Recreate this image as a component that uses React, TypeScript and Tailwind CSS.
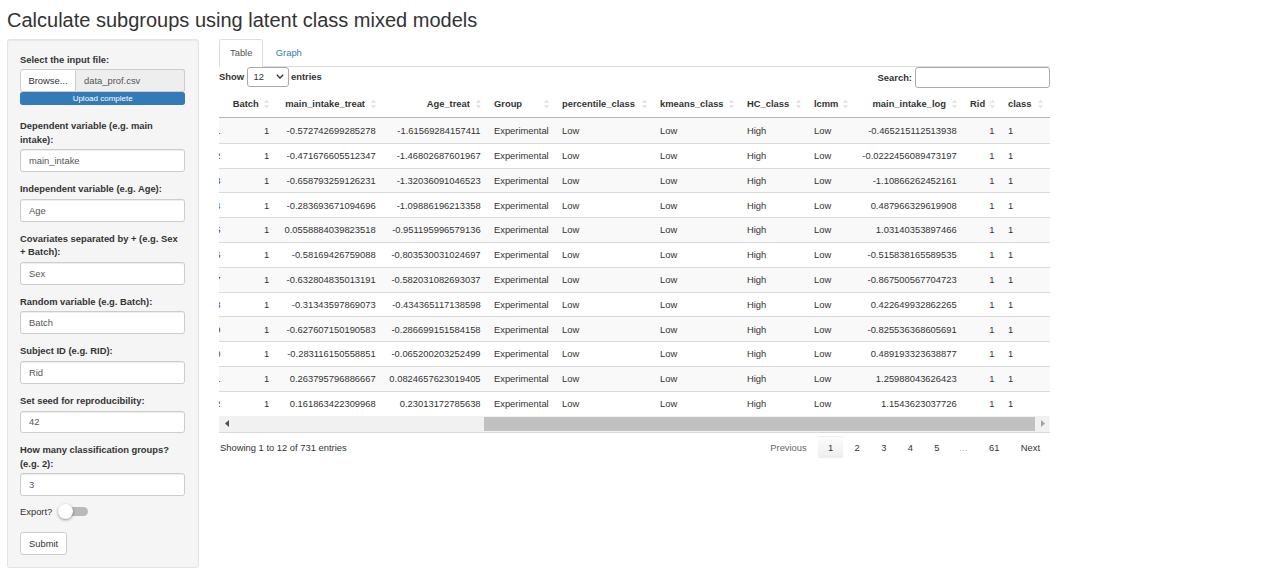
import React from "react";
import clsx from "clsx";

const rows: [string, string, string][] = [
  ["-0.572742699285278", "-1.61569284157411", "-0.465215112513938"],
  ["-0.471676605512347", "-1.46802687601967", "-0.0222456089473197"],
  ["-0.658793259126231", "-1.32036091046523", "-1.10866262452161"],
  ["-0.283693671094696", "-1.09886196213358", "0.487966329619908"],
  ["0.0558884039823518", "-0.951195996579136", "1.03140353897466"],
  ["-0.58169426759088", "-0.803530031024697", "-0.515838165589535"],
  ["-0.632804835013191", "-0.582031082693037", "-0.867500567704723"],
  ["-0.31343597869073", "-0.434365117138598", "0.422649932862265"],
  ["-0.627607150190583", "-0.286699151584158", "-0.825536368605691"],
  ["-0.283116150558851", "-0.065200203252499", "0.489193323638877"],
  ["0.263795796886667", "0.0824657623019405", "1.25988043626423"],
  ["0.161863422309968", "0.23013172785638", "1.1543623037726"],
];

const columns = [
  { name: "", width: "w-[40px]", right: true },
  { name: "Batch", width: "w-[50px]", right: true },
  { name: "main_intake_treat", width: "w-[106.4px]", right: true },
  { name: "Age_treat", width: "w-[104.9px]", right: true },
  { name: "Group", width: "w-[68px]", right: false },
  { name: "percentile_class", width: "w-[98px]", right: false },
  { name: "kmeans_class", width: "w-[87px]", right: false },
  { name: "HC_class", width: "w-[67px]", right: false },
  { name: "lcmm", width: "w-[47.7px]", right: false },
  { name: "main_intake_log", width: "w-[108.4px]", right: true },
  { name: "Rid", width: "w-[37.9px]", right: true },
  { name: "class", width: "w-[48.7px]", right: false },
];

function Field({ label, value }: { label: string; value: string }) {
  return (
    <div className="mb-[10px]">
      <label className="block font-bold mb-[3.35px]">{label}</label>
      <input
        readOnly
        value={value}
        className="block w-full h-[22.8px] px-[8px] border border-[#ccc] rounded-[2.7px] bg-white text-[#555] text-[9.4px] shadow-[inset_0_1px_1px_rgba(0,0,0,0.075)] outline-none"
      />
    </div>
  );
}

function Sidebar() {
  return (
    <div className="w-[192px] shrink-0 bg-[#f5f5f5] border border-[#e3e3e3] rounded-[2.7px] pl-[12px] pr-[12.7px] pt-[12.7px] pb-[12px] shadow-[inset_0_1px_1px_rgba(0,0,0,0.05)]">
      <label className="block font-bold mb-[3.35px]">Select the input file:</label>
      <div className="flex h-[22.8px]">
        <div className="w-[56px] flex items-center justify-center bg-white border border-[#ccc] rounded-l-[2.7px] text-[#333]">
          Browse...
        </div>
        <div className="flex-1 flex items-center pl-[8px] bg-[#eee] border border-l-0 border-[#ccc] rounded-r-[2.7px] text-[#555]">
          data_prof.csv
        </div>
      </div>
      <div className="h-[13px] mb-[14px] rounded-[2.7px] bg-[#337ab7] text-white text-[8px] leading-[13px] text-center">
        Upload complete
      </div>
      <Field label="Dependent variable (e.g. main intake):" value="main_intake" />
      <Field label="Independent variable (e.g. Age):" value="Age" />
      <Field label="Covariates separated by + (e.g. Sex + Batch):" value="Sex" />
      <Field label="Random variable (e.g. Batch):" value="Batch" />
      <Field label="Subject ID (e.g. RID):" value="Rid" />
      <Field label="Set seed for reproducibility:" value="42" />
      <div className="-mb-[2px]">
        <Field label="How many classification groups? (e.g. 2):" value="3" />
      </div>
      <div className="flex items-center h-[14px] mb-[13.7px]">
        <span>Export?</span>
        <span className="relative ml-[5.6px] w-[30px] h-[15px]">
          <span className="absolute left-[3px] right-0 top-[3px] h-[9px] rounded-full bg-[#b9b9b9]" />
          <span className="absolute left-0 top-0 w-[15px] h-[15px] rounded-full bg-white shadow-[0_1px_3px_rgba(0,0,0,0.4)]" />
        </span>
      </div>
      <button className="h-[22.8px] px-[8px] border border-[#ccc] rounded-[2.7px] bg-white text-[#333]">
        Submit
      </button>
    </div>
  );
}

function SortIcon() {
  return (
    <svg
      className="absolute right-[6.7px] top-1/2 -translate-y-1/2"
      width="5"
      height="10"
      viewBox="0 0 5 10"
    >
      <path d="M2.5 0.5L5 4H0z M0 6h5L2.5 9.5z" fill="#333" fillOpacity="0.13" />
    </svg>
  );
}

function Pager() {
  const btn = "px-[9px] py-[4.2px] ml-[1.34px] border border-transparent rounded-[2px]";
  return (
    <div className="flex items-center">
      <span className={clsx(btn, "text-[#666]")}>Previous</span>
      <span className={clsx(btn, "border-[#c4c4c4] bg-gradient-to-b from-[#fdfdfd] to-[#ededed]")}>1</span>
      <span className={btn}>2</span>
      <span className={btn}>3</span>
      <span className={btn}>4</span>
      <span className={btn}>5</span>
      <span className="px-[9.4px] text-[#aaa]">…</span>
      <span className={btn}>61</span>
      <span className={btn}>Next</span>
    </div>
  );
}

function DataTable() {
  return (
    <div>
      <div className="flex justify-between h-[24px]">
        <div className="flex items-start font-bold">
          <span className="mt-[2.6px]">Show</span>
          <div className="mx-[2.5px] w-[42px] h-[19.5px] flex items-center justify-between pl-[6px] pr-[4px] border border-[#aaa] rounded-[3px] font-normal">
            <span>12</span>
            <svg width="8" height="5" viewBox="0 0 8 5">
              <path d="M0.8 0.8L4 4L7.2 0.8" fill="none" stroke="#333" strokeWidth="1.3" />
            </svg>
          </div>
          <span className="mt-[2.6px]">entries</span>
        </div>
        <div className="flex items-start font-bold">
          <span className="mt-[3.5px]">Search:</span>
          <div className="ml-[3px] w-[135px] h-[21px] border border-[#aaa] rounded-[3px] bg-white" />
        </div>
      </div>
      <div className="overflow-hidden w-[831px]">
        <table className="table-fixed border-separate border-spacing-0 w-[864px] -ml-[33px] text-[9.4px] leading-[13.4px] text-[#333]">
          <colgroup>
            {columns.map((c, j) => (
              <col key={j} className={c.width} />
            ))}
          </colgroup>
          <thead>
            <tr>
              {columns.map((c, j) => (
                <th
                  key={j}
                  className={clsx(
                    "relative h-[27px] pl-[6.7px] pr-[17.4px] font-bold border-b border-[#b3b3b3] whitespace-nowrap",
                    c.right ? "text-right" : "text-left"
                  )}
                >
                  {c.name}
                  {j > 0 && <SortIcon />}
                </th>
              ))}
            </tr>
          </thead>
          <tbody>
            {rows.map((r, i) => {
              const cells = [String(i + 1), "1", r[0], r[1], "Experimental", "Low", "Low", "High", "Low", r[2], "1", "1"];
              return (
                <tr key={i}>
                  {cells.map((v, j) => (
                    <td
                      key={j}
                      className={clsx(
                        "h-[24.8px] whitespace-nowrap",
                        j === 0 ? "pl-[6.7px] pr-[5.5px]" : "px-[6.7px]",
                        columns[j].right ? "text-right" : "text-left",
                        i > 0 && "border-t border-[#d9d9d9]",
                        i % 2 === 0 && "bg-[#f9f9f9]"
                      )}
                    >
                      {v}
                    </td>
                  ))}
                </tr>
              );
            })}
          </tbody>
        </table>
      </div>
      <div className="flex h-[16px] bg-[#f1f1f1]">
        <div className="w-[15px] flex items-center justify-center">
          <svg width="4" height="7" viewBox="0 0 4 7">
            <path d="M4 0V7L0 3.5z" fill="#505050" />
          </svg>
        </div>
        <div className="flex-1 flex items-center">
          <div className="ml-[250px] w-[551px] h-[14px] bg-[#c1c1c1]" />
        </div>
        <div className="w-[15px] flex items-center justify-center">
          <svg width="4" height="7" viewBox="0 0 4 7">
            <path d="M0 0V7L4 3.5z" fill="#a3a3a3" />
          </svg>
        </div>
      </div>
      <div className="h-px bg-[#d9d9d9]" />
      <div className="flex justify-between items-center mt-[3px]">
        <span className="pl-[1px]">Showing 1 to 12 of 731 entries</span>
        <Pager />
      </div>
    </div>
  );
}

export default function App() {
  return (
    <div className="w-[1280px] h-[573px] overflow-hidden bg-white text-[#333] text-[9.4px] leading-[13.4px] font-['Liberation_Sans',Arial,sans-serif]">
      <h1 className="ml-[7px] pt-[9px] mb-[8px] text-[20px] leading-[22px] font-normal">
        Calculate subgroups using latent class mixed models
      </h1>
      <div className="flex items-start pl-[7px]">
        <Sidebar />
        <div className="ml-[20px] w-[831px]">
          <ul className="flex h-[28px] border-b border-[#ddd]">
            <li className="-mb-px h-[28px] px-[10px] flex items-center bg-white border border-[#ddd] border-b-transparent rounded-t-[2.7px] text-[#555]">
              Table
            </li>
            <li className="ml-[1.34px] h-[27px] px-[11px] flex items-center text-[#337ab7]">Graph</li>
          </ul>
          <DataTable />
        </div>
      </div>
    </div>
  );
}
